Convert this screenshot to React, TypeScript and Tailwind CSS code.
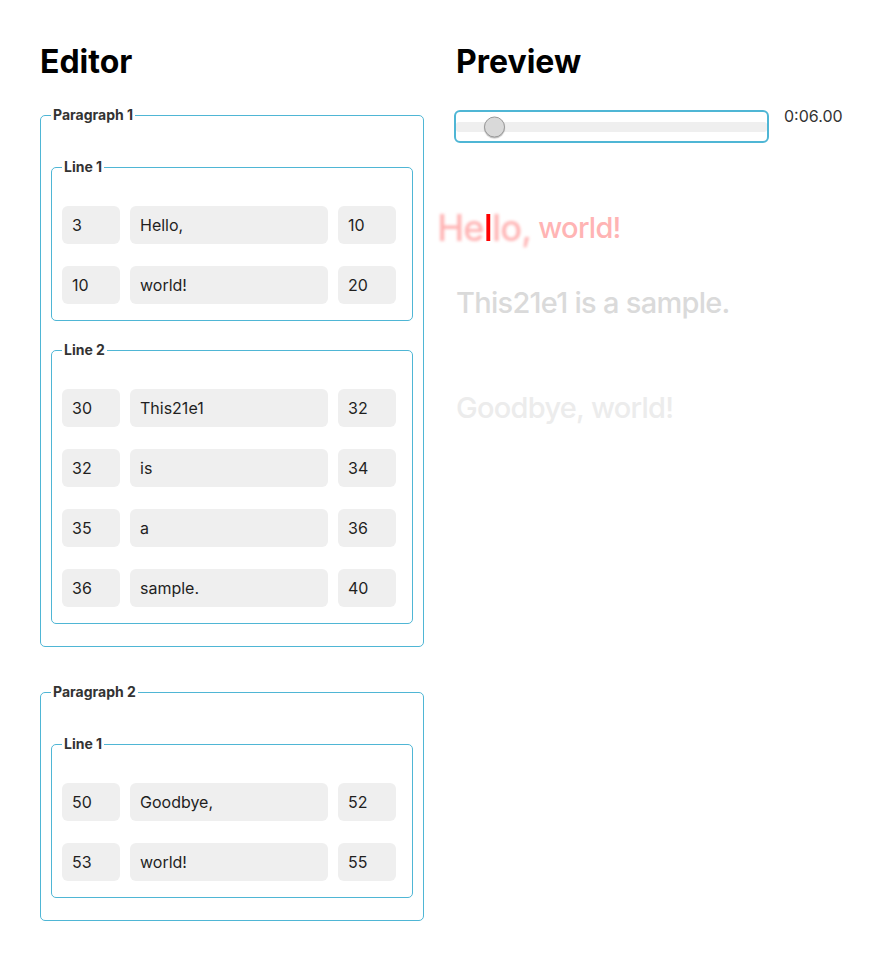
import React from "react";

type Word = [number, string, number];
type Paragraph = { lines: Word[][] };

const paragraphs: Paragraph[] = [
  {
    lines: [
      [
        [3, "Hello,", 10],
        [10, "world!", 20],
      ],
      [
        [30, "This21e1", 32],
        [32, "is", 34],
        [35, "a", 36],
        [36, "sample.", 40],
      ],
    ],
  },
  {
    lines: [
      [
        [50, "Goodbye,", 52],
        [53, "world!", 55],
      ],
    ],
  },
];

const currentTime = 6;

const WordRow = ({ word }: { word: Word }) => (
  <div className="flex gap-[10px]">
    <input
      readOnly
      value={word[0]}
      className="w-[58px] h-[38px] rounded-[6px] bg-[#efefef] px-[10px] text-[16px] text-[#1f1f1f] outline-none"
    />
    <input
      readOnly
      value={word[1]}
      className="w-[198px] h-[38px] rounded-[6px] bg-[#efefef] px-[10px] text-[16px] text-[#1f1f1f] outline-none"
    />
    <input
      readOnly
      value={word[2]}
      className="w-[58px] h-[38px] rounded-[6px] bg-[#efefef] px-[10px] text-[16px] text-[#1f1f1f] outline-none"
    />
  </div>
);

const ActiveWord = ({ word }: { word: Word }) => {
  const [start, text, end] = word;
  const chars = text.split("");
  const idx = Math.floor(((currentTime - start) / (end - start)) * chars.length);
  return (
    <span className="inline-block origin-right scale-[1.25]">
      {chars.map((c, i) =>
        i === idx ? (
          <span key={i} className="inline-block text-[#ff0000]">
            {c}
          </span>
        ) : (
          <span key={i} className="inline-block text-[#ffb4b4] blur-[1.2px]">
            {c}
          </span>
        )
      )}
    </span>
  );
};

export default function App() {
  return (
    <div className="flex gap-[32px] px-[40px] pt-[43px] pb-[50px] font-['Inter','Noto_Sans',sans-serif] bg-white">
      {/* Editor */}
      <div className="w-[384px] shrink-0">
        <h1 className="text-[32px] leading-[38px] font-bold text-black">Editor</h1>
        <div className="mt-[26px] flex flex-col gap-[37px]">
          {paragraphs.map((p, pi) => (
            <fieldset
              key={pi}
              className="border border-[#4fb6d5] rounded-[5px] px-[10px] pt-[36px] pb-[22px]"
            >
              <legend className="px-[2px] text-[14px] leading-[16px] font-bold text-[#333]">
                Paragraph {pi + 1}
              </legend>
              <div className="flex flex-col gap-[21px]">
                {p.lines.map((line, li) => (
                  <fieldset
                    key={li}
                    className="border border-[#4fb6d5] rounded-[5px] px-[10px] pt-[31px] pb-[16px]"
                  >
                    <legend className="px-[2px] text-[14px] leading-[16px] font-bold text-[#333]">
                      Line {li + 1}
                    </legend>
                    <div className="flex flex-col gap-[22px]">
                      {line.map((w, wi) => (
                        <WordRow key={wi} word={w} />
                      ))}
                    </div>
                  </fieldset>
                ))}
              </div>
            </fieldset>
          ))}
        </div>
      </div>

      {/* Preview */}
      <div className="flex-1">
        <h1 className="text-[32px] leading-[38px] font-bold text-black">Preview</h1>
        <div className="mt-[29px] flex items-start">
          <div className="relative -ml-[2px] w-[315px] h-[33px] rounded-[6px] border-2 border-[#4fb6d5] flex items-center">
            <div className="h-[10px] w-full bg-[#efefef] rounded-[3px]" />
            <div className="absolute left-[28px] top-1/2 -translate-y-1/2 w-[21px] h-[21px] rounded-full bg-[#d9d9d9] border border-[#9a9a9a] shadow-[0_1px_1px_rgba(0,0,0,0.25)]" />
          </div>
          <span className="ml-[15px] -mt-[4px] text-[16px] leading-[20px] text-[#333]">0:06.00</span>
        </div>

        <div className="mt-[67px] flex flex-col gap-[70px]">
          {paragraphs.map((p, pi) => (
            <div key={pi} className="flex flex-col gap-[40px]">
              {p.lines.map((line, li) => {
                const lineActive = pi === 0 && li === 0;
                const color = lineActive
                  ? "text-[#ffb4b4]"
                  : pi === 0
                  ? "text-[#dadada]"
                  : "text-[#ececec]";
                return (
                  <div
                    key={li}
                    className={`text-[29px] leading-[35px] font-medium tracking-[-0.025em] whitespace-nowrap ${color}`}
                  >
                    {line.map((w, wi) => {
                      const active = currentTime >= w[0] && currentTime < w[2];
                      return (
                        <React.Fragment key={wi}>
                          {wi > 0 && " "}
                          {active ? <ActiveWord word={w} /> : <span>{w[1]}</span>}
                        </React.Fragment>
                      );
                    })}
                  </div>
                );
              })}
            </div>
          ))}
        </div>
      </div>
    </div>
  );
}
